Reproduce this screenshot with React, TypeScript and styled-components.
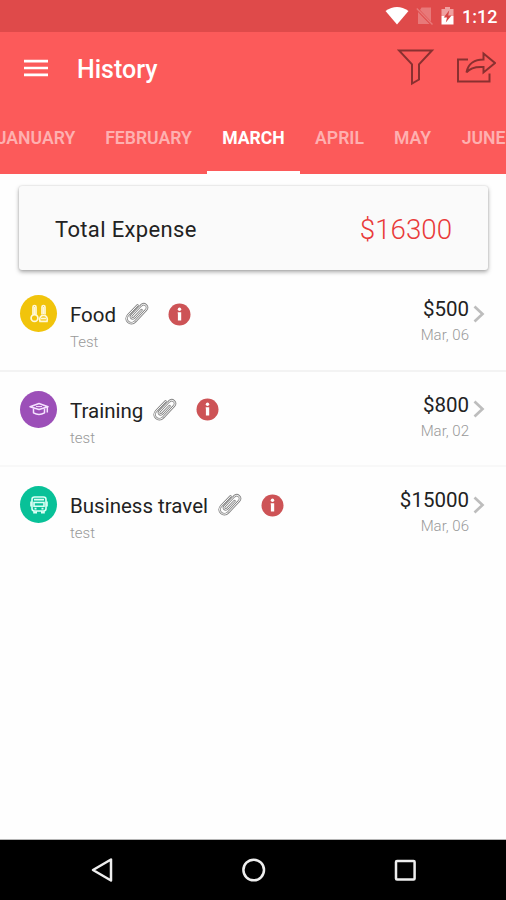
import React from "react";
import styled, { createGlobalStyle } from "styled-components";

const GlobalStyle = createGlobalStyle`
  * { box-sizing: border-box; }
  body { margin: 0; background: #fff; font-family: Roboto, sans-serif; }
  svg { display: block; flex: none; }
`;

const Screen = styled.div`
  width: 506px;
  height: 900px;
  display: flex;
  flex-direction: column;
  overflow: hidden;
  background: #fefefe;
`;

const StatusBar = styled.div`
  height: 32px;
  flex: none;
  display: flex;
  align-items: center;
  justify-content: flex-end;
  padding-right: 9px;
  background: #df4a4a;
`;

const Clock = styled.span`
  width: 35px;
  margin-left: 8px;
  padding-top: 2px;
  font-size: 18px;
  line-height: 20px;
  font-weight: 500;
  white-space: nowrap;
  color: #fff;
`;

const AppBar = styled.header`
  height: 72px;
  flex: none;
  display: flex;
  align-items: center;
  padding: 0 10px 0 24px;
  background: #fc5a5a;
`;

const Title = styled.h1`
  margin: 3px auto 0 29px;
  font-size: 25px;
  line-height: 30px;
  font-weight: 500;
  color: #fff;
`;

const Actions = styled.div`
  display: flex;
  gap: 21px;
`;

const Tabs = styled.nav`
  height: 70px;
  flex: none;
  display: flex;
  overflow: hidden;
  background: #fc5a5a;
`;

const TabStrip = styled.div`
  display: flex;
  margin-left: -18px;
`;

const Tab = styled.div<{ $width: number; $active?: boolean }>`
  width: ${(p) => p.$width}px;
  flex: none;
  display: flex;
  justify-content: center;
  padding-top: 24px;
  border-bottom: 3px solid ${(p) => (p.$active ? "#fff" : "transparent")};
  font-size: 17.6px;
  line-height: 21px;
  font-weight: ${(p) => (p.$active ? 700 : 600)};
  white-space: nowrap;
  color: ${(p) => (p.$active ? "#fff" : "#feb0b0")};
`;

const Content = styled.main`
  flex: 1;
  display: flex;
  flex-direction: column;
`;

const TotalCard = styled.section`
  height: 84px;
  flex: none;
  margin: 12px 18px 6px 19px;
  display: flex;
  align-items: center;
  justify-content: space-between;
  padding: 0 36px;
  border-radius: 3px;
  background: #fafafa;
  box-shadow: 0 2px 4px rgba(0, 0, 0, 0.34), 0 0 2px rgba(0, 0, 0, 0.14);
`;

const TotalLabel = styled.span`
  padding-top: 2px;
  font-size: 22px;
  letter-spacing: 0.35px;
  color: #222;
`;

const TotalValue = styled.span`
  padding-top: 2px;
  font-size: 27.7px;
  font-weight: 300;
  color: #e93a3a;
`;

const Row = styled.article<{ $line: string }>`
  height: 95.7px;
  flex: none;
  display: flex;
  padding: 19px 21px 0 20px;
  border-bottom: 2px solid ${(p) => p.$line};
`;

const Category = styled.div<{ $color: string }>`
  width: 37px;
  height: 37px;
  flex: none;
  display: flex;
  align-items: center;
  justify-content: center;
  border-radius: 50%;
  background: ${(p) => p.$color};
`;

const Details = styled.div`
  flex: 1;
  margin-left: 13px;
`;

const NameLine = styled.div`
  height: 38px;
  display: flex;
  align-items: center;
`;

const Name = styled.span<{ $width: number }>`
  width: ${(p) => p.$width}px;
  padding-top: 2px;
  font-size: 20.5px;
  line-height: 24px;
  white-space: nowrap;
  color: #222;
`;

const InfoSlot = styled.div`
  margin-left: 19px;
`;

const Small = styled.div`
  font-size: 15px;
  line-height: 18px;
  font-weight: 300;
  color: #999;
`;

const Amounts = styled.div`
  text-align: right;
  margin-right: 4px;
`;

const Amount = styled.div`
  height: 31px;
  padding-top: 2px;
  font-size: 20.5px;
  line-height: 24px;
  color: #222;
`;

const Chevron = styled.div`
  padding-top: 9.5px;
`;

const NavBar = styled.footer`
  height: 60px;
  flex: none;
  display: flex;
  align-items: center;
  justify-content: space-between;
  padding: 0 89px 0 90px;
  background: #000;
  box-shadow: 0 -1px 0 #b5b5b5;
`;

const WifiIcon = () => (
  <svg width="24" height="18" viewBox="0 0 24 18">
    <path d="M0.5 4Q12-4 23.500 4L12 17.500Z" fill="#fff" />
  </svg>
);

const NoSimIcon = () => (
  <svg width="18" height="20" viewBox="0 0 18 20">
    <path d="M5.500 1.500h9.500v14L4 4zM2 6l11.500 12H2z" fill="#e87979" />
    <path d="M0.800 2.500L16.500 18.500" stroke="#e87979" strokeWidth="1.400" />
  </svg>
);

const BatteryIcon = () => (
  <svg width="13" height="20" viewBox="0 0 13 20">
    <path d="M4 1h5v2h3.500v7H.500V3H4z" fill="#efa0a0" />
    <path d="M.500 10h12v8.500H.500z" fill="#fff" />
    <path d="M8.300 4.200L2.700 11.500H6L4.800 16.500L10.500 9.500H7.200z" fill="#d84343" />
  </svg>
);

const MenuIcon = () => (
  <svg width="24" height="18" viewBox="0 0 24 18">
    <path d="M0 2.200h24M0 9h24M0 15.800h24" stroke="#fff" strokeWidth="2.700" />
  </svg>
);

const FilterIcon = () => (
  <svg width="38" height="38" viewBox="0 0 38 38" fill="none" stroke="#8a3030" strokeWidth="2">
    <path d="M2 1.500h33L22 15.300V30.500L15 34.500V15.300z" />
  </svg>
);

const ShareIcon = () => (
  <svg width="40" height="38" viewBox="0 0 40 38" fill="none" stroke="#8a3030" strokeWidth="2">
    <path d="M12 10.500H2v22h31.500v-8" />
    <path d="M27.500 4.500L39 14L27.500 23.500V18C20 17.500 14 19 10.500 23.500C12 14.500 19 10.500 27.500 10.500z" />
  </svg>
);

const clipPath =
  "M16.500 8L9.300 15.700C7.300 17.800 4.700 15.300 6.700 13.200L16 3.500C19.400 .200 24.200 4.400 20.800 8.200L10.300 19.300C5.400 24.300-1.600 18 3.200 13L12.500 3.300";

const Paperclip = () => (
  <svg width="24" height="24" viewBox="0 0 24 24" fill="none" strokeLinecap="round" strokeLinejoin="round">
    <path d={clipPath} stroke="#858585" strokeWidth="2.500" />
    <path d={clipPath} stroke="#fff" strokeWidth="1" />
  </svg>
);

const InfoIcon = () => (
  <svg width="23" height="23" viewBox="0 0 23 23">
    <circle cx="11.500" cy="11.500" r="11" fill="#cd5356" />
    <circle cx="11.500" cy="6.300" r="1.700" fill="#fff" />
    <path d="M9.700 9.200h3.500v8.300H9.900v-7h-.200z" fill="#fff" />
  </svg>
);

const FoodIcon = () => (
  <svg width="20" height="20" viewBox="0 0 20 20" fill="none" stroke="#fff8d8" strokeWidth="1.700">
    <path d="M4 10.500V3q0-1.500 1.500-1.500T7 3v7.500M13 10.500V3q0-1.500 1.500-1.500T16 3v7.500" />
    <path d="M5.500 3v7M14.500 3v7" strokeWidth="1" />
    <circle cx="5.500" cy="14" r="3.400" />
    <path d="M11 17.400c-1-3.500.500-6 3.500-6s4.500 2.500 3.500 6z" />
    <path d="M12 14.500h5" />
  </svg>
);

const CapIcon = () => (
  <svg width="20" height="16" viewBox="0 0 20 16" fill="none" stroke="#f5e3ff" strokeWidth="1.500" strokeLinejoin="round">
    <path d="M1 5.700L10 2.500L19 5.700L10 8.500z" />
    <path d="M4.500 7.500v4.300Q10 15 15.500 11.800V7.500M18.300 6v5.500" />
    <path d="M7 5.600h6" strokeWidth="1" />
  </svg>
);

const BusIcon = () => (
  <svg width="20" height="20" viewBox="0 0 20 20" fill="none" stroke="#dcfff5" strokeWidth="1.600">
    <rect x="3" y="2" width="14" height="14" rx="2.500" />
    <path d="M5 4.600h10M5 7.500h10v3.700H5zM2 6.500v5M18 6.500v5M5 16v1.700h2.200V16M12.800 16v1.700H15V16M5.500 13.600h2M12.500 13.600h2" />
  </svg>
);

const ChevronIcon = () => (
  <svg width="12" height="18" viewBox="0 0 12 18">
    <path d="M1.500 1.500L9.500 9L1.500 16.500" fill="none" stroke="#bdbdbd" strokeWidth="2.700" />
  </svg>
);

const BackIcon = () => (
  <svg width="24" height="26" viewBox="0 0 24 26">
    <path d="M21 2.500v21L3 13z" fill="none" stroke="#eee" strokeWidth="2.500" strokeLinejoin="round" />
  </svg>
);

const HomeIcon = () => (
  <svg width="26" height="26" viewBox="0 0 26 26">
    <circle cx="12.700" cy="13" r="10.300" fill="none" stroke="#eee" strokeWidth="2.500" />
  </svg>
);

const RecentIcon = () => (
  <svg width="24" height="24" viewBox="0 0 24 24">
    <rect x="3" y="3" width="18.600" height="18.600" rx="1" fill="none" stroke="#eee" strokeWidth="2.500" />
  </svg>
);

const StatusIcons = styled.div`
  display: flex;
  align-items: center;
  gap: 7px;
`;

const months = [
  { label: "JANUARY", width: 108 },
  { label: "FEBRUARY", width: 117 },
  { label: "MARCH", width: 93, active: true },
  { label: "APRIL", width: 79 },
  { label: "MAY", width: 67 },
  { label: "JUNE", width: 75 },
];

const expenses = [
  { name: "Food", nameWidth: 55, note: "Test", amount: "$500", date: "Mar, 06", color: "#f1c40b", icon: <FoodIcon />, line: "#f3f3f3" },
  { name: "Training", nameWidth: 83, note: "test", amount: "$800", date: "Mar, 02", color: "#9c4fb8", icon: <CapIcon />, line: "#f8f8f8" },
  { name: "Business travel", nameWidth: 147.5, note: "test", amount: "$15000", date: "Mar, 06", color: "#08c198", icon: <BusIcon />, line: "transparent" },
];

export default function App() {
  return (
    <Screen>
      <GlobalStyle />
      <StatusBar>
        <StatusIcons>
          <WifiIcon />
          <NoSimIcon />
          <BatteryIcon />
        </StatusIcons>
        <Clock>1:12</Clock>
      </StatusBar>
      <AppBar>
        <MenuIcon />
        <Title>History</Title>
        <Actions>
          <FilterIcon />
          <ShareIcon />
        </Actions>
      </AppBar>
      <Tabs>
        <TabStrip>
          {months.map((m) => (
            <Tab key={m.label} $width={m.width} $active={m.active}>
              {m.label}
            </Tab>
          ))}
        </TabStrip>
      </Tabs>
      <Content>
        <TotalCard>
          <TotalLabel>Total Expense</TotalLabel>
          <TotalValue>$16300</TotalValue>
        </TotalCard>
        {expenses.map((e) => (
          <Row key={e.name} $line={e.line}>
            <Category $color={e.color}>{e.icon}</Category>
            <Details>
              <NameLine>
                <Name $width={e.nameWidth}>{e.name}</Name>
                <Paperclip />
                <InfoSlot>
                  <InfoIcon />
                </InfoSlot>
              </NameLine>
              <Small>{e.note}</Small>
            </Details>
            <Amounts>
              <Amount>{e.amount}</Amount>
              <Small>{e.date}</Small>
            </Amounts>
            <Chevron>
              <ChevronIcon />
            </Chevron>
          </Row>
        ))}
      </Content>
      <NavBar>
        <BackIcon />
        <HomeIcon />
        <RecentIcon />
      </NavBar>
    </Screen>
  );
}
